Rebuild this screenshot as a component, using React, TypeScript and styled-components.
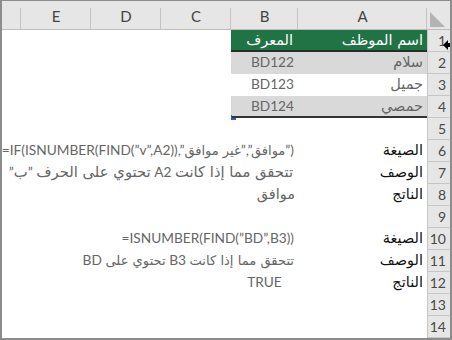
import React from 'react';
import styled, { createGlobalStyle } from 'styled-components';

const GlobalStyle = createGlobalStyle`
  html, body {
    margin: 0;
    padding: 0;
    background: #ffffff;
  }
`;

const FONT = `Lato, "DejaVu Sans", sans-serif`;
const ARABIC_FONT = `"DejaVu Sans", sans-serif`;

const COLS = [
  { key: 'A', width: 129 },
  { key: 'B', width: 67 },
  { key: 'C', width: 70 },
  { key: 'D', width: 70 },
  { key: 'E', width: 70 },
];

type CellData = {
  text: string;
  dir?: 'ltr' | 'rtl';
  align?: 'right' | 'center';
  pad?: number;
  ar?: number; // size of the arabic runs in a mixed cell
};

type RowData = {
  a?: CellData;
  b?: CellData;
  kind?: 'head' | 'band' | 'plain' | 'label';
  last?: boolean;
};

const rows: RowData[] = [
  { a: { text: 'اسم الموظف' }, b: { text: 'المعرف', pad: 5 }, kind: 'head' },
  { a: { text: 'سلام' }, b: { text: 'BD122', dir: 'ltr' }, kind: 'band' },
  { a: { text: 'جميل' }, b: { text: 'BD123', dir: 'ltr' }, kind: 'plain' },
  { a: { text: 'حمصي' }, b: { text: 'BD124', dir: 'ltr' }, kind: 'band', last: true },
  {},
  {
    a: { text: 'الصيغة' },
    b: { text: '=IF(ISNUMBER(FIND(”v”,A2)),”موافق”,”غير موافق”)', dir: 'ltr', ar: 13 },
    kind: 'label',
  },
  { a: { text: 'الوصف' }, b: { text: 'تتحقق مما إذا كانت A2 تحتوي على الحرف ”ب”', ar: 14.8, pad: 5 }, kind: 'label' },
  { a: { text: 'الناتج' }, b: { text: 'موافق', pad: 3 }, kind: 'label' },
  {},
  { a: { text: 'الصيغة' }, b: { text: '=ISNUMBER(FIND(”BD”,B3))', dir: 'ltr' }, kind: 'label' },
  { a: { text: 'الوصف' }, b: { text: 'تتحقق مما إذا كانت B3 تحتوي على BD', ar: 13.1 }, kind: 'label' },
  { a: { text: 'الناتج' }, b: { text: 'TRUE', align: 'center', dir: 'ltr' }, kind: 'label' },
  {},
  {},
];

const Sheet = styled.div`
  position: relative;
  width: 452px;
  height: 340px;
  box-sizing: border-box;
  border: 1px solid #8c8c8c;
  border-width: 1px 2px 2px 2px;
  overflow: hidden;
  background: #ffffff;
  direction: rtl;
  font-family: ${FONT};
`;

const HeaderRow = styled.div`
  display: flex;
  height: 29px;
  box-sizing: border-box;
  background: #e6e6e6;
  border-bottom: 1px solid #bdbdbd;
`;

const Corner = styled.div`
  width: 23px;
  flex: none;
  display: flex;
  align-items: flex-end;
  justify-content: center;
  padding: 0 1px 2px 0;
  box-sizing: border-box;
`;

const ColHead = styled.div<{ $w: number }>`
  width: ${(p) => p.$w}px;
  flex: none;
  box-sizing: border-box;
  display: flex;
  align-items: flex-end;
  justify-content: center;
  padding-bottom: 4px;
  font-size: 15px;
  color: #444444;
  background: linear-gradient(#c3c3c3, #c3c3c3) no-repeat right bottom / 1px 21px;
`;

const Filler = styled.div`
  flex: 1;
  background: linear-gradient(#c3c3c3, #c3c3c3) no-repeat right bottom / 1px 21px;
`;

const Row = styled.div`
  display: flex;
  height: 22px;
`;

const RowNum = styled.div`
  width: 23px;
  flex: none;
  box-sizing: border-box;
  background: #e6e6e6;
  border-bottom: 1px solid #c6c6c6;
  border-left: 1px solid #c6c6c6;
  font-size: 14px;
  color: #4a4a4a;
  direction: ltr;
  text-align: right;
  padding-right: 4px;
  line-height: 22px;
`;

const Cell = styled.div<{
  $w: number;
  $kind?: string;
  $last?: boolean;
  $align?: string;
  $pad?: number;
  $muted?: boolean;
  $latin?: boolean;
}>`
  width: ${(p) => p.$w}px;
  height: 22px;
  flex: none;
  box-sizing: border-box;
  white-space: nowrap;
  text-align: ${(p) => p.$align || 'right'};
  padding: 0 ${(p) => p.$pad ?? 4}px;
  line-height: 20px;
  font-family: ${(p) => (p.$latin ? FONT : ARABIC_FONT)};
  font-size: ${(p) => (p.$latin ? '13.7px' : '14.5px')};
  color: ${(p) => (p.$kind === 'head' ? '#ffffff' : p.$muted ? '#666666' : '#111111')};
  background: ${(p) =>
    p.$kind === 'head' ? '#217346' : p.$kind === 'band' ? '#d9d9d9' : 'transparent'};
  border-bottom: ${(p) =>
    p.$kind === 'head' ? '2px solid #22302a' : p.$last ? '2px solid #333333' : 'none'};
`;

const CellText = styled.span<{ $dir: 'ltr' | 'rtl' }>`
  direction: ${(p) => p.$dir};
  unicode-bidi: isolate;
`;

// arabic runs inside mixed cells; no isolation so the bidi order stays as typed
const Ar = styled.span<{ $size: number }>`
  font-family: ${ARABIC_FONT};
  font-size: ${(p) => p.$size}px;
`;

const Empty = styled.div<{ $w?: number }>`
  width: ${(p) => (p.$w ? `${p.$w}px` : 'auto')};
  flex: ${(p) => (p.$w ? 'none' : '1')};
`;

const Cursor = styled.svg`
  position: absolute;
  left: 441px;
  top: 38px;
`;

const Handle = styled.div`
  position: absolute;
  left: 229px;
  top: 114px;
  width: 4px;
  height: 3px;
  border-left: 1px solid #2f5fc4;
  border-bottom: 2px solid #2f5fc4;
`;

const ARABIC_RUN = /([\u0600-\u06FF]+(?:\s+[\u0600-\u06FF]+)*)/;

function withArabic(text: string, size: number) {
  return text.split(ARABIC_RUN).map((part, i) =>
    i % 2 === 1 ? (
      <Ar key={i} $size={size}>
        {part}
      </Ar>
    ) : (
      <React.Fragment key={i}>{part}</React.Fragment>
    )
  );
}

function renderCell(c: CellData, w: number, r: RowData, muted: boolean) {
  const latin = !!c.ar || c.dir === 'ltr';
  return (
    <Cell
      $w={w}
      $kind={r.kind}
      $last={r.last}
      $align={c.align}
      $pad={c.pad}
      $muted={muted}
      $latin={latin}
    >
      <CellText $dir={c.dir || 'rtl'}>{c.ar ? withArabic(c.text, c.ar) : c.text}</CellText>
    </Cell>
  );
}

export default function App() {
  return (
    <>
      <GlobalStyle />
      <Sheet>
        <HeaderRow>
          <Corner>
            <svg width="16" height="16" viewBox="0 0 16 16">
              <polygon points="0,1 0,16 15,16" fill="#b3b3b3" />
            </svg>
          </Corner>
          {COLS.map((c) => (
            <ColHead key={c.key} $w={c.width}>
              {c.key}
            </ColHead>
          ))}
          <Filler />
        </HeaderRow>
        {rows.map((r, i) => (
          <Row key={i}>
            <RowNum>{i + 1}</RowNum>
            {r.a ? renderCell(r.a, 129, r, r.kind !== 'label') : <Empty $w={129} />}
            {r.b ? renderCell(r.b, 67, r, true) : <Empty $w={67} />}
            <Empty />
          </Row>
        ))}
        <Handle />
        <Cursor width="11" height="12" viewBox="0 0 11 12">
          <polygon points="0,6 5,1 5,4 11,4 11,8 5,8 5,11" fill="#000000" />
        </Cursor>
      </Sheet>
    </>
  );
}
